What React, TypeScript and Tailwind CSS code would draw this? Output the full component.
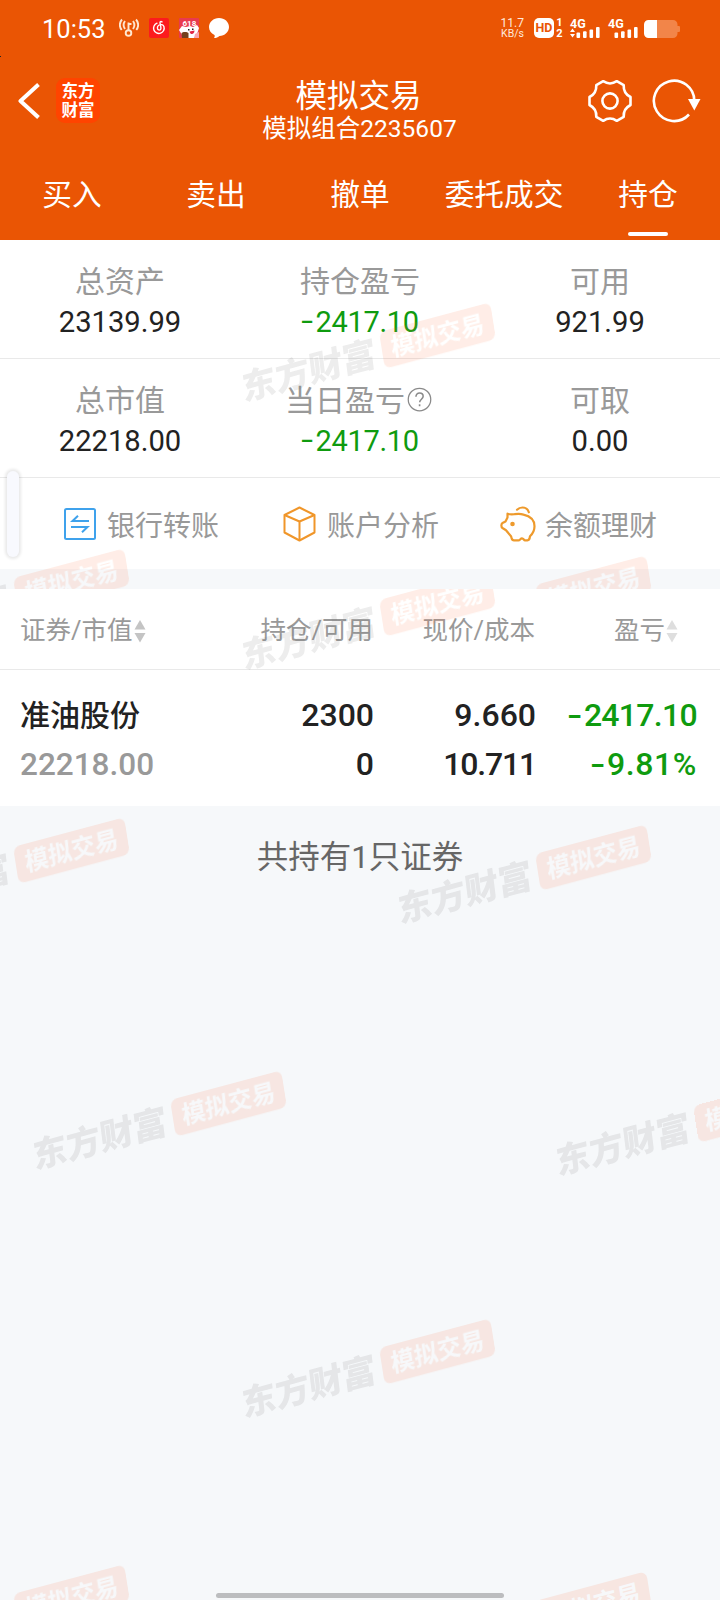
import React from 'react';

interface WatermarkProps {
  className: string;
}

// Tilted brand mark, placed freely inside its clipping section
const Watermark: React.FC<WatermarkProps> = ({ className }) => (
  <div aria-hidden="true" className={`pointer-events-none absolute h-[100px] w-[256px] opacity-[0.12] ${className}`}>
    <div className="absolute left-[-1px] top-[48px] -rotate-[15deg] -skew-x-[8deg] whitespace-nowrap text-[34.5px] font-black leading-[38px] text-[#666]">
      东方财富
    </div>
    <div className="absolute left-[139px] top-[13px] flex h-[37px] w-[115px] -rotate-[15deg] -skew-x-[6deg] items-center justify-center whitespace-nowrap rounded-[7px] bg-[#ff6a33] text-[24px] font-bold text-white">
      模拟交易
    </div>
  </div>
);

interface LossProps {
  value: string;
  className?: string;
}

// Loss figure with a wide leading minus sign
const Loss: React.FC<LossProps> = ({ value, className = '' }) => (
  <>
    <span className="mr-px inline-block h-[40px] origin-right scale-x-110 font-[Inter] leading-[38px]">-</span>
    <span className={className}>{value}</span>
  </>
);

interface StatProps {
  label: string;
  value: string;
  negative?: boolean;
  help?: boolean;
}

const Stat: React.FC<StatProps> = ({ label, value, negative, help }) => (
  <div className="flex flex-1 flex-col items-center">
    <div className="flex h-[40px] items-center text-[30px] leading-[40px] text-[#999]">
      {label}
      {help && (
        <svg className="-mt-[4px] ml-[2px] mr-[3px] h-[25px] w-[25px]" viewBox="0 0 26 26" fill="none" stroke="#8a8a8a" strokeWidth="1.3">
          <circle cx="13" cy="13" r="11.7" />
          <path d="M9.3 10.2c0-2.4 1.6-3.9 3.8-3.9s3.7 1.4 3.7 3.4c0 2.8-3.6 3.2-3.6 6.2" strokeWidth="1.6" />
          <path d="M13.1 18v2" strokeWidth="1.7" />
        </svg>
      )}
    </div>
    {negative ? (
      <div className="flex h-[40px] items-center text-[29px] leading-[40px] text-[#0f9b0f]">
        <Loss value={value} className="tracking-[-0.300px]" />
      </div>
    ) : (
      <div className="h-[40px] text-[29.200px] leading-[40px] text-[#222]">{value}</div>
    )}
  </div>
);

const SortIcon: React.FC<{ up: string; down: string }> = ({ up, down }) => (
  <svg className="ml-[1px] h-[24px] w-[12px]" viewBox="0 0 12 24">
    <path d="M6 1l5.5 9.500H.5z" fill={up} />
    <path d="M6 23.500l5.500-9.500H.5z" fill={down} />
  </svg>
);

const StatusBar: React.FC = () => (
  <div className="flex h-[56px] items-center pl-[42px] pr-[40px] text-white">
    <span className="w-[62px] pt-[2px] text-[25.500px] leading-[30px]">10:53</span>
    <svg className="ml-[15px] h-[20px] w-[20px]" viewBox="0 0 20 20" fill="none" stroke="#ffe6cf" strokeWidth="1.9">
      <circle cx="9.500" cy="15" r="2.800" />
      <path d="M9.500 12V4.500M9.500 6h3" />
      <path d="M6 3c-1.700 2.300-1.700 5.500 0 8M3 1.500C.2 4.500.2 9 2.700 12M14 3c1.700 2.300 1.700 5.500 0 8M17 1.500c2.800 3 2.800 7.500.3 10.500" />
    </svg>
    <svg className="ml-[10px] h-[20px] w-[20px]" viewBox="0 0 20 20" fill="none">
      <rect width="20" height="20" rx="2" fill="#fc1b1d" />
      <path d="M8 5.200a5.300 5.300 0 1 0 6.900 3.300c-.8-1.900-3-2.500-4.800-1.500-2.400 1.300-2.200 5 .1 5.100 2.500 0 1.900-2.600.8-7.300-.2-1.200 1-1.600 2-.9" stroke="#fff" strokeWidth="1.400" strokeLinecap="round" />
    </svg>
    <svg className="ml-[10px] h-[20px] w-[20px]" viewBox="0 0 20 20">
      <rect width="20" height="20" rx="1" fill="#e93a4e" />
      <path d="M0 12l3-4 4 1 4-1 3 1 4-2 2 3-2 6-3 4H5z" fill="#fff" />
      <text x="3.500" y="7.800" fontSize="8" fontWeight="700" fill="#fff">618</text>
      <path d="M2.500 15c1-1.500 6-1.500 7 0v5H3z" fill="#74401c" />
      <path d="M9 11h1.500v1.500H9zM13 10.500h1.500V12H13z" fill="#222" />
      <path d="M10.500 13.500l5-1c0 4-4 5-5 1z" fill="#e02645" />
      <path d="M16 16l4-2v6h-5z" fill="#f6a6b0" />
    </svg>
    <svg className="ml-[10px] h-[20px] w-[20px]" viewBox="0 0 20 20">
      <path d="M10 0c5.600 0 10 3.900 10 8.900s-4.400 8.900-9.500 9C9.400 18.900 7 20 5 20c.8-.8.9-2 .5-3C2 15.500 0 12.600 0 9 0 4 4.400 0 10 0z" fill="#fff" />
    </svg>
    <div className="ml-auto flex items-center">
      <div className="flex w-[24px] flex-col items-end text-[#ffe9dc]">
        <span className="text-[12px] leading-[11px]">11.7</span>
        <span className="text-[10.500px] leading-[10px]">KB/s</span>
      </div>
      <div className="ml-[10px] flex h-[20px] w-[20px] items-center justify-center rounded-[5px] bg-white text-[12.500px] font-bold leading-[16px] text-[#ea5504]">
        HD
      </div>
      <div className="ml-[2px] flex w-[7px] flex-col items-center text-[11px] font-bold leading-[11px]">
        <span>1</span>
        <span>2</span>
      </div>
      <svg className="ml-[6px] h-[20px] w-[31px] overflow-visible" viewBox="0 0 31 20" fill="#fff">
        <text x="1" y="9.500" fontSize="12.500" fontWeight="700">4G</text>
        <path d="M3.500 10.500L6 14H1zM3.500 19.500L6 16H1z" />
        <rect x="7.500" y="14.500" width="3.600" height="5.500" rx="1" />
        <rect x="14" y="13.300" width="3.600" height="6.700" rx="1" />
        <rect x="20.500" y="11.500" width="3.600" height="8.500" rx="1" />
        <rect x="27" y="9" width="3.600" height="11" rx="1" />
      </svg>
      <svg className="ml-[8px] h-[20px] w-[30px] overflow-visible" viewBox="0 0 30 20" fill="#fff">
        <text x="0" y="9.500" fontSize="12.500" fontWeight="700">4G</text>
        <rect x="6.500" y="14.500" width="3.600" height="5.500" rx="1" />
        <rect x="13" y="13.300" width="3.600" height="6.700" rx="1" />
        <rect x="19.500" y="11.500" width="3.600" height="8.500" rx="1" />
        <rect x="26" y="9" width="3.600" height="11" rx="1" />
      </svg>
      <svg className="ml-[6px] mt-[2px] h-[18px] w-[36px]" viewBox="0 0 36 18">
        <path d="M13 0h16a4.500 4.500 0 0 1 4.500 4.500V6H35a1 1 0 0 1 1 1v4a1 1 0 0 1-1 1h-1.500v1.500A4.500 4.500 0 0 1 29 18H13z" fill="#f28549" />
        <path d="M13 0v18H4.500A4.500 4.500 0 0 1 0 13.500v-9A4.500 4.500 0 0 1 4.500 0z" fill="#fff" />
      </svg>
    </div>
  </div>
);

const TitleBar: React.FC = () => (
  <div className="flex h-[94px] items-start justify-between text-white">
    <div className="flex w-[230px] items-center pl-[18px] pt-[22px]">
      <svg className="h-[36px] w-[22px]" viewBox="0 0 22 36" fill="none" stroke="#fff" strokeWidth="4" strokeLinejoin="round">
        <path d="M20.500 1.500L2.500 18l18 16.500" />
      </svg>
      <div className="ml-[16px] flex h-[45px] w-[44px] flex-col items-center justify-center rounded-[9px] bg-[#ff4400] text-[16.500px] font-bold leading-[19px]">
        <span>东方</span>
        <span>财富</span>
      </div>
    </div>
    <div className="flex flex-col items-center">
      <div className="mr-[3px] mt-[22px] h-[37px] text-[31.500px] leading-[38px]">模拟交易</div>
      <div className="mr-px h-[28px] text-[24.500px] leading-[28px]">模拟组合2235607</div>
    </div>
    <div className="flex w-[230px] items-center justify-end pr-[19px] pt-[22px]">
      <svg className="h-[46px] w-[46px]" viewBox="-23 -23 46 46" fill="none" stroke="#fff" strokeWidth="2.600" strokeLinejoin="round">
        <path d="M-20.500-4Q-13.300-7.700-13.700-15.800L-6.800-19.800Q0-15.300 6.800-19.800L13.700-15.800Q13.300-7.700 20.500-4V4Q13.300 7.700 13.700 15.800L6.800 19.800Q0 15.300-6.800 19.800L-13.700 15.800Q-13.300 7.700-20.500 4Z" />
        <circle r="7.600" />
      </svg>
      <svg className="ml-[19px] h-[46px] w-[49px]" viewBox="0 0 49 46" fill="none">
        <path d="M37 36.500A20.200 20.200 0 1 1 42.300 23" stroke="#fff" strokeWidth="2.600" />
        <path d="M36 21h12.500l-6.200 11.500z" fill="#fff" />
      </svg>
    </div>
  </div>
);

const tabs = ['买入', '卖出', '撤单', '委托成交', '持仓'];

const Tabs: React.FC = () => (
  <div className="flex h-[90px] text-white">
    {tabs.map((tab) => (
      <div key={tab} className="flex w-[144px] flex-col items-center pt-[25px]">
        <span className="h-[40px] whitespace-nowrap text-[29.700px] leading-[40px]">{tab}</span>
        {tab === '持仓' && <span className="mt-[17px] h-[4px] w-[40px] rounded-[2px] bg-white" />}
      </div>
    ))}
  </div>
);

export default function App() {
  return (
    <div className="relative flex h-[1600px] w-[720px] flex-col overflow-hidden bg-[#f6f8fa] font-[Roboto,'Noto_Sans_CJK_SC',sans-serif] text-[#222]">
      <header className="bg-[#ea5504]">
        <StatusBar />
        <TitleBar />
        <Tabs />
      </header>

      {/* Account summary */}
      <section className="relative h-[349px] overflow-hidden">
        <div className="bg-white">
          <div className="flex h-[119px] border-b border-[#e9e9e9] pt-[22px]">
            <Stat label="总资产" value="23139.99" />
            <Stat label="持仓盈亏" value="2417.10" negative />
            <Stat label="可用" value="921.99" />
          </div>
          <div className="flex h-[119px] border-b border-[#e9e9e9] pt-[22px]">
            <Stat label="总市值" value="22218.00" />
            <Stat label="当日盈亏" value="2417.10" negative help />
            <Stat label="可取" value="0.00" />
          </div>
          <div className="flex h-[91px] items-center pl-[63px] text-[28px] text-[#999]">
            <div className="flex w-[219px] items-center">
              <svg className="h-[34px] w-[34px]" viewBox="0 0 34 34" fill="none" stroke="#3fa2ec" strokeWidth="2">
                <rect x="2" y="2" width="30" height="30" rx="1.500" />
                <path d="M26 14H9.500L15 8.800M8 20h16.500L19 25.200" />
              </svg>
              <span className="ml-[10px] pt-[6px]">银行转账</span>
            </div>
            <div className="flex w-[218px] items-center">
              <svg className="h-[36px] w-[34px]" viewBox="0 0 34 36" fill="none" stroke="#f0962a" strokeWidth="2" strokeLinejoin="round">
                <path d="M17.500 1.500L32.500 9v17.500L17.500 34.500 2.500 26.500V9z" />
                <path d="M2.500 9l15 6.500 15-6.500M17.500 15.500V34" />
              </svg>
              <span className="ml-[11px] pt-[6px]">账户分析</span>
            </div>
            <div className="flex items-center">
              <svg className="h-[36px] w-[36px]" viewBox="0 0 36 36" fill="none" stroke="#ee9a2c" strokeWidth="2.200" strokeLinejoin="round" strokeLinecap="round">
                <path d="M7.500 7.700c2 .9 4.200.7 7 .5 2.500-.4 6-.6 9 .4 6.500 1.500 11 5.600 11 11.600 0 4-1.800 7.500-4.500 10-.2 2-1 4.200-2.500 4.200h-2.500c-1.200 0-1.300-2-3-2s-2 2-3.500 2H14c-2.500 0-2-1.200-3-4.200L6 24.200 2.500 22c-1.500-1-1.500-4 0-5L5.500 15.500l2-4z" />
                <path d="M17 3.700c1.500-1.500 3.300-2.200 5.500-2.200 3 0 5.500 2 6.300 4.800" />
                <circle cx="12.500" cy="18" r="1.200" fill="#ee9a2c" />
              </svg>
              <span className="ml-[9px] pt-[6px]">余额理财</span>
            </div>
          </div>
        </div>
        <Watermark className="left-[241px] top-[64px]" />
        <Watermark className="left-[-125px] top-[310px]" />
        <Watermark className="left-[397px] top-[317px]" />
      </section>

      {/* Holdings table */}
      <section className="relative h-[217px] overflow-hidden bg-white">
        <div className="flex h-[81px] items-center border-b border-[#e9e9e9] pl-[20px] pt-[3px] text-[25.500px] text-[#999]">
          <div className="flex w-[181px] items-center">
            证券/市值
            <SortIcon up="#c4c4c4" down="#c4c4c4" />
          </div>
          <div className="w-[172px] text-right">持仓/可用</div>
          <div className="w-[162px] text-right">现价/成本</div>
          <div className="flex w-[143px] items-center justify-end">
            盈亏
            <SortIcon up="#dedede" down="#dedede" />
          </div>
        </div>
        <div className="flex pl-[20px] pt-[21px] text-[32px] font-medium leading-[49px]">
          <div className="w-[181px]">
            <div className="text-[30px]">准油股份</div>
            <div className="text-[31.500px] text-[#999]">22218.00</div>
          </div>
          <div className="w-[173px] text-right">
            <div>2300</div>
            <div>0</div>
          </div>
          <div className="w-[162px] text-right">
            <div>9.660</div>
            <div className="tracking-[-1.200px]">10.711</div>
          </div>
          <div className="w-[161px] text-[#0f9b0f]">
            <div className="flex h-[49px] items-center justify-end">
              <Loss value="2417.10" className="tracking-[-0.700px]" />
            </div>
            <div className="flex h-[49px] items-center justify-end">
              <Loss value="9.81%" className="tracking-[0.600px]" />
            </div>
          </div>
        </div>
        <Watermark className="left-[241px] top-[-17px]" />
      </section>

      <section className="relative flex-1 overflow-hidden">
        <div className="pt-[29px] text-center text-[31.500px] leading-[46px] text-[#666]">共持有1只证券</div>
        <Watermark className="left-[-125px] top-[13px]" />
        <Watermark className="left-[397px] top-[20px]" />
        <Watermark className="left-[32px] top-[266px]" />
        <Watermark className="left-[555px] top-[272px]" />
        <Watermark className="left-[241px] top-[514px]" />
        <Watermark className="left-[-125px] top-[760px]" />
        <Watermark className="left-[397px] top-[767px]" />
      </section>

      {/* Edge handle and home indicator float above the page */}
      <div className="absolute left-[7px] top-[471px] h-[86px] w-[12px] rounded-full bg-[#f8f9fe] shadow-[0_0_3px_2px_rgba(0,0,0,0.09)]" />
      <div className="absolute bottom-[2px] left-[216px] h-[5px] w-[288px] rounded-full bg-[#bcbdbf]" />
      <div className="absolute left-0 top-[56px] h-px w-px bg-[#222]" />
    </div>
  );
}
